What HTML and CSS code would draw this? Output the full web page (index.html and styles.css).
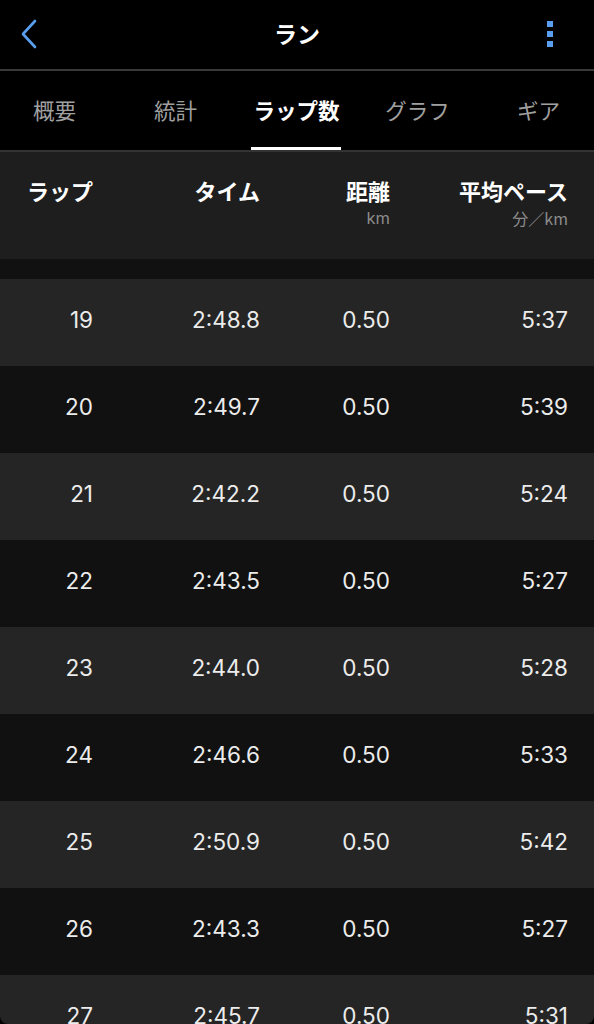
FILE: index.html
```html
<!DOCTYPE html>
<html lang="ja">
<head>
<meta charset="utf-8">
<link rel="stylesheet" href="styles.css">
</head>
<body>
<div class="app">
  <header class="nav">
    <div class="nav-back">
      <svg width="20" height="30" viewBox="0 0 20 30"><path d="M16 2 L4 15 L16 28" fill="none" stroke="#5a9ef0" stroke-width="2.6" stroke-linecap="round" stroke-linejoin="round"/></svg>
    </div>
    <div class="nav-title">ラン</div>
    <div class="nav-more">
      <span class="dot"></span><span class="dot"></span><span class="dot"></span>
    </div>
  </header>
  <nav class="tabs">
    <div class="tab">概要</div>
    <div class="tab">統計</div>
    <div class="tab active">ラップ数</div>
    <div class="tab">グラフ</div>
    <div class="tab">ギア</div>
  </nav>
  <div class="thead">
    <div class="th c1"><span class="tt">ラップ</span></div>
    <div class="th c2"><span class="tt">タイム</span></div>
    <div class="th c3"><span class="tt">距離</span><span class="ts">km</span></div>
    <div class="th c4"><span class="tt">平均ペース</span><span class="ts">分／km</span></div>
  </div>
  <div class="spacer"></div>
  <div class="rows">
    <div class="row odd"><div class="c1">19</div><div class="c2">2:48.8</div><div class="c3">0.50</div><div class="c4">5:37</div></div>
    <div class="row even"><div class="c1">20</div><div class="c2">2:49.7</div><div class="c3">0.50</div><div class="c4">5:39</div></div>
    <div class="row odd"><div class="c1">21</div><div class="c2">2:42.2</div><div class="c3">0.50</div><div class="c4">5:24</div></div>
    <div class="row even"><div class="c1">22</div><div class="c2">2:43.5</div><div class="c3">0.50</div><div class="c4">5:27</div></div>
    <div class="row odd"><div class="c1">23</div><div class="c2">2:44.0</div><div class="c3">0.50</div><div class="c4">5:28</div></div>
    <div class="row even"><div class="c1">24</div><div class="c2">2:46.6</div><div class="c3">0.50</div><div class="c4">5:33</div></div>
    <div class="row odd"><div class="c1">25</div><div class="c2">2:50.9</div><div class="c3">0.50</div><div class="c4">5:42</div></div>
    <div class="row even"><div class="c1">26</div><div class="c2">2:43.3</div><div class="c3">0.50</div><div class="c4">5:27</div></div>
    <div class="row odd"><div class="c1">27</div><div class="c2">2:45.7</div><div class="c3">0.50</div><div class="c4">5:31</div></div>
  </div>
</div>
</body>
</html>
```
FILE: styles.css
```css
* { box-sizing: border-box; }
html, body { margin: 0; padding: 0; background: #000; }
body {
  width: 594px;
  height: 1024px;
  overflow: hidden;
  font-family: "Noto Sans CJK JP", "Noto Sans", sans-serif;
  color: #fff;
}
.app {
  display: flex;
  flex-direction: column;
  height: 1024px;
  overflow: hidden;
  border-radius: 0 0 8px 8px;
}

.nav {
  height: 71px;
  flex-shrink: 0;
  display: grid;
  grid-template-columns: 60px 1fr 60px;
  align-items: center;
  background: #000;
  border-bottom: 2px solid #3a3a3a;
}
.nav-back { display: flex; padding-left: 19px; padding-bottom: 2px; }
.nav-title {
  text-align: center;
  font-size: 23px;
  font-weight: 700;
  line-height: 1;
  padding-bottom: 2px;
}
.nav-more {
  display: flex;
  flex-direction: column;
  align-items: flex-end;
  gap: 4px;
  padding-right: 41px;
  padding-bottom: 2px;
}
.dot { width: 6px; height: 6px; background: #5a9ef0; display: block; }

.tabs {
  height: 81px;
  flex-shrink: 0;
  display: grid;
  grid-template-columns: repeat(5, 121px);
  margin-left: -6px;
  background: #000;
  border-bottom: 2px solid #333;
}
.tab {
  display: flex;
  align-items: center;
  justify-content: center;
  font-size: 21.5px;
  color: #a0a0a0;
  padding-bottom: 2px;
  position: relative;
}
.tab.active { color: #fff; font-weight: 700; }
.tab.active::after {
  content: "";
  position: absolute;
  left: 15px;
  right: 16px;
  bottom: 0;
  height: 3px;
  background: #fff;
}

.thead {
  height: 107px;
  flex-shrink: 0;
  background: #1e1e1e;
  display: grid;
  grid-template-columns: 93px 167px 130px 178px;
  padding-top: 22px;
}
.th {
  display: flex;
  flex-direction: column;
  align-items: flex-end;
}
.tt { font-size: 22px; font-weight: 700; line-height: 32px; color: #fff; }
.ts { font-size: 16.5px; line-height: 22px; color: #8c8c8c; font-family: "Inter", "Noto Sans CJK JP", sans-serif; margin-top: 1px; }
.th.c4 .ts { font-family: "Noto Sans CJK JP", sans-serif; font-size: 16px; }

.spacer { height: 20px; flex-shrink: 0; background: #111; }

.rows { display: flex; flex-direction: column; }
.row {
  height: 87px;
  display: grid;
  grid-template-columns: 93px 167px 130px 178px;
  align-items: center;
  font-family: "Inter", "Roboto", sans-serif;
  font-size: 22.5px;
  color: #ececec;
  padding-bottom: 7px;
  flex-shrink: 0;
}
.row > div { text-align: right; }
.row.odd { background: #252525; }
.row.even { background: #111111; }
```
